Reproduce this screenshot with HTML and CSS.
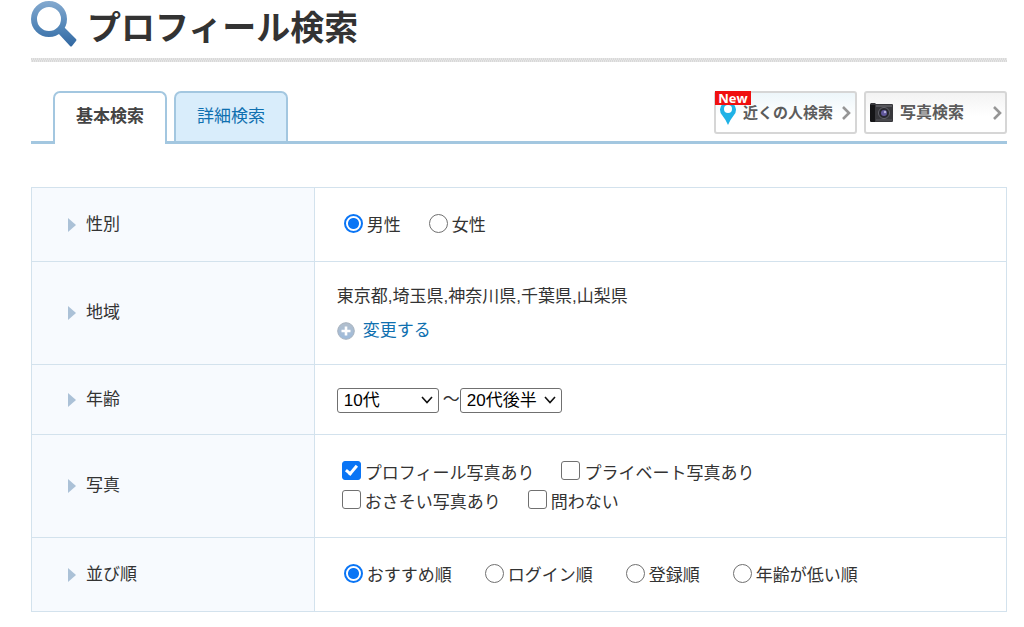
FILE: index.html
```html
<!DOCTYPE html>
<html lang="ja">
<head>
<meta charset="utf-8">
<meta name="viewport" content="width=device-width, initial-scale=1">
<title>プロフィール検索</title>
<link rel="stylesheet" href="styles.css">
</head>
<body>
<main class="page">
  <header class="heading">
    <svg class="heading-icon" viewBox="0 0 48 48" aria-hidden="true">
      <defs>
        <linearGradient id="lens" x1="0" y1="0" x2="0" y2="48" gradientUnits="userSpaceOnUse">
          <stop offset="0" stop-color="#86abd0"/>
          <stop offset="0.6" stop-color="#4f83b6"/>
          <stop offset="1" stop-color="#2f659f"/>
        </linearGradient>
      </defs>
      <circle cx="18" cy="19" r="15" fill="none" stroke="url(#lens)" stroke-width="6"/>
      <path d="M27 33L33 27L45 39Q46 40 45 41L41 46Q40 47 39 46Z" fill="url(#lens)"/>
    </svg>
    <h1 class="heading-title">プロフィール検索</h1>
  </header>

  <nav class="tabs">
    <a class="tab tab-active" href="#basic">基本検索</a>
    <a class="tab" href="#detail">詳細検索</a>
    <div class="shortcuts">
      <a class="shortcut shortcut-nearby" href="#nearby">
        <span class="new-badge">New</span>
        <svg class="shortcut-pin" viewBox="0 0 18 28" aria-hidden="true">
          <path d="M9 26Q7 21 3 16A8 8 0 1 1 15 16Q11 21 9 26Z" fill="#20b2e6"/>
          <circle cx="9" cy="10" r="4" fill="#fff"/>
        </svg>
        <span class="shortcut-text">近くの人検索</span>
        <svg class="shortcut-arrow" viewBox="0 0 9 14" aria-hidden="true"><path d="M1 1L7 7L1 13" fill="none" stroke="#969696" stroke-width="2.6"/></svg>
      </a>
      <a class="shortcut shortcut-photo" href="#photo">
        <svg class="shortcut-camera" viewBox="0 0 24 20" aria-hidden="true">
          <path d="M0 1L1 0H5L6 1H22Q23 1 23 2V18Q23 19 22 19H1L0 18Z" fill="#38383c"/>
          <path d="M0 2H5V19H1L0 18Z" fill="#151517"/>
          <path d="M6 3H22" stroke="#77777c" stroke-width="1"/>
          <path d="M6 17H22" stroke="#57575d" stroke-width="1"/>
          <circle cx="14" cy="10" r="5.5" fill="#27272e" stroke="#65656d" stroke-width="1"/>
          <circle cx="14" cy="10" r="3" fill="#61579b"/>
          <circle cx="15" cy="9" r="1.2" fill="#b6b3dd"/>
        </svg>
        <span class="shortcut-text shortcut-text-large">写真検索</span>
        <svg class="shortcut-arrow" viewBox="0 0 9 14" aria-hidden="true"><path d="M1 1L7 7L1 13" fill="none" stroke="#969696" stroke-width="2.6"/></svg>
      </a>
    </div>
  </nav>

  <form>
    <table class="criteria">
      <tr class="row-medium">
        <th scope="row"><span class="label">性別</span></th>
        <td>
          <div class="options">
            <label class="option"><input class="radio" type="radio" name="sex" checked>男性</label>
            <label class="option"><input class="radio" type="radio" name="sex">女性</label>
          </div>
        </td>
      </tr>
      <tr class="row-tall">
        <th scope="row"><span class="label">地域</span></th>
        <td>
          <p class="region">東京都,埼玉県,神奈川県,千葉県,山梨県</p>
          <a class="change" href="#region">
            <svg class="change-icon" viewBox="0 0 18 18" aria-hidden="true">
              <defs>
                <linearGradient id="disc" x1="0" y1="0" x2="0" y2="1">
                  <stop offset="0" stop-color="#b3bfcc"/>
                  <stop offset="1" stop-color="#9dbbdc"/>
                </linearGradient>
              </defs>
              <circle cx="9" cy="9" r="8.3" fill="url(#disc)" stroke="#a7b2be" stroke-width="1"/>
              <path d="M9 4.5V13.5M4.5 9H13.5" stroke="#fff" stroke-width="2.6"/>
            </svg>変更する</a>
        </td>
      </tr>
      <tr class="row-short">
        <th scope="row"><span class="label">年齢</span></th>
        <td>
          <div class="range">
            <span class="picker">
              <select class="select" aria-label="年齢の下限"><option>10代</option><option>20代前半</option><option>20代後半</option></select>
              <svg class="picker-arrow" viewBox="0 0 12 8" aria-hidden="true"><path d="M1 1L6 6.5L11 1" fill="none" stroke="#111" stroke-width="1.6"/></svg>
            </span>
            <span class="range-mark">〜</span>
            <span class="picker">
              <select class="select" aria-label="年齢の上限"><option>20代後半</option><option>30代前半</option></select>
              <svg class="picker-arrow" viewBox="0 0 12 8" aria-hidden="true"><path d="M1 1L6 6.5L11 1" fill="none" stroke="#111" stroke-width="1.6"/></svg>
            </span>
          </div>
        </td>
      </tr>
      <tr class="row-tall">
        <th scope="row"><span class="label">写真</span></th>
        <td class="cell-low">
          <div class="options options-check">
            <label class="option"><input class="check" type="checkbox" checked>プロフィール写真あり</label>
            <label class="option"><input class="check" type="checkbox">プライベート写真あり</label>
          </div>
          <div class="options options-check">
            <label class="option"><input class="check" type="checkbox">おさそい写真あり</label>
            <label class="option"><input class="check" type="checkbox">問わない</label>
          </div>
        </td>
      </tr>
      <tr class="row-medium">
        <th scope="row"><span class="label">並び順</span></th>
        <td>
          <div class="options options-sort">
            <label class="option"><input class="radio" type="radio" name="sort" checked>おすすめ順</label>
            <label class="option"><input class="radio" type="radio" name="sort">ログイン順</label>
            <label class="option"><input class="radio" type="radio" name="sort">登録順</label>
            <label class="option"><input class="radio" type="radio" name="sort">年齢が低い順</label>
          </div>
        </td>
      </tr>
    </table>
  </form>
</main>
</body>
</html>
```

FILE: styles.css
```css
* {
  box-sizing: border-box;
}

body {
  margin: 0;
  background: #fff;
  color: #333;
  font: 17px/24px "Liberation Sans", "Noto Sans CJK JP", sans-serif;
}

a {
  color: #0f70b0;
  text-decoration: none;
}

.page {
  padding: 0 17px 16px 31px;
}

.heading {
  display: flex;
  align-items: center;
  gap: 8px;
  height: 62px;
  padding-bottom: 14px;
  background: repeating-conic-gradient(#d8d8d8 0 25%, #e6e6e6 0 50%) bottom / 2px 4px repeat-x;
}

.heading-icon {
  width: 48px;
  height: 48px;
}

.heading-title {
  margin: 0;
  padding-top: 8px;
  font-size: 34px;
  line-height: 48px;
}

.tabs {
  display: flex;
  align-items: flex-start;
  gap: 7px;
  margin-top: 29px;
  padding-left: 22px;
  border-bottom: 3px solid #a3c7e0;
  height: 53px;
}

.tab {
  width: 114px;
  height: 50px;
  border: 2px solid #a3c7e0;
  border-bottom: 0;
  border-radius: 7px 7px 0 0;
  background: #d9edfb;
  line-height: 48px;
  text-align: center;
}

.tab-active {
  height: 53px;
  background: #fff;
  color: #444;
  font-weight: bold;
}

.shortcuts {
  display: flex;
  gap: 7px;
  margin-left: auto;
}

.shortcut {
  position: relative;
  display: flex;
  align-items: center;
  width: 143px;
  height: 43px;
  padding: 0 4px;
  border: 2px solid #d6d6d6;
  border-radius: 3px;
  background: linear-gradient(#f3f3f3, #fff 60%);
  color: #5c5c5c;
  font-size: 15px;
  font-weight: bold;
}

.shortcut-nearby {
  padding-left: 3px;
  background: linear-gradient(#edf6fa, #fff 60%);
}

.new-badge {
  position: absolute;
  top: -2px;
  left: -1px;
  width: 36px;
  height: 14px;
  background: #f01010;
  color: #fff;
  font: bold 13px/14px "Open Sans", sans-serif;
  text-align: center;
}

.shortcut-pin {
  width: 18px;
  height: 28px;
  margin-right: 6px;
}

.shortcut-camera {
  width: 24px;
  height: 20px;
  margin-right: 6px;
}

.shortcut-text-large {
  font-size: 16px;
}

.shortcut-arrow {
  width: 9px;
  height: 14px;
  margin-left: auto;
}

.shortcut-photo .shortcut-arrow {
  margin-right: -1px;
}

.criteria {
  width: 100%;
  margin-top: 43px;
  border-collapse: collapse;
}

.criteria th,
.criteria td {
  padding: 0 22px;
  border: 1px solid #d3e2ed;
  text-align: left;
  vertical-align: middle;
}

.criteria td {
  padding-top: 1px;
}

.criteria th {
  width: 29%;
  padding-left: 36px;
  background: #f7fafe;
  font-weight: normal;
}

.criteria .cell-low {
  padding-top: 3px;
}

.row-medium {
  height: 74px;
}

.row-tall {
  height: 103px;
}

.row-short {
  height: 70px;
}

.label {
  display: flex;
  align-items: center;
  gap: 10px;
}

.label::before {
  content: "";
  border: solid transparent;
  border-width: 7px 0 7px 8px;
  border-left-color: #abc1d7;
}

.options {
  display: flex;
  gap: 28px;
  padding-left: 7px;
}

.options-check {
  gap: 27px;
  padding-left: 5px;
  line-height: 29px;
}

.options-sort {
  gap: 33px;
}

.option {
  display: flex;
  align-items: center;
  gap: 4px;
  padding-top: 2px;
}

.options-check .option {
  padding-top: 0;
}

.radio,
.check {
  appearance: none;
  flex: none;
  width: 19px;
  height: 19px;
  margin: 0 0 5px;
  border: 1px solid #707070;
  border-radius: 50%;
  background: #fff;
}

.check {
  border-radius: 3px;
}

.radio:checked {
  border: 2px solid #0a75f5;
  background: radial-gradient(circle closest-side, #0a75f5 0 5px, #fff 6px);
}

.check:checked {
  display: flex;
  justify-content: center;
  border-color: #0a75f5;
  background: #0a75f5;
}

.check:checked::after {
  content: "";
  width: 4px;
  height: 9px;
  margin-top: 1px;
  border: solid #fff;
  border-width: 0 3px 3px 0;
  transform: rotate(40deg);
}

.region {
  margin: 0 0 10px;
}

.change {
  display: flex;
  align-items: center;
  gap: 8px;
}

.change-icon {
  width: 18px;
  height: 18px;
}

.range {
  display: flex;
  align-items: center;
}

.range-mark {
  width: 21px;
  text-align: right;
}

.picker {
  display: grid;
  align-items: center;
}

.select {
  grid-area: 1 / 1;
  appearance: none;
  width: 102px;
  height: 25px;
  padding: 0 6px;
  border: 1px solid #707070;
  border-radius: 3px;
  background: #fff;
  color: #000;
  font: inherit;
  line-height: 23px;
}

.picker-arrow {
  grid-area: 1 / 1;
  justify-self: end;
  width: 12px;
  height: 8px;
  margin-right: 6px;
  pointer-events: none;
}
```
